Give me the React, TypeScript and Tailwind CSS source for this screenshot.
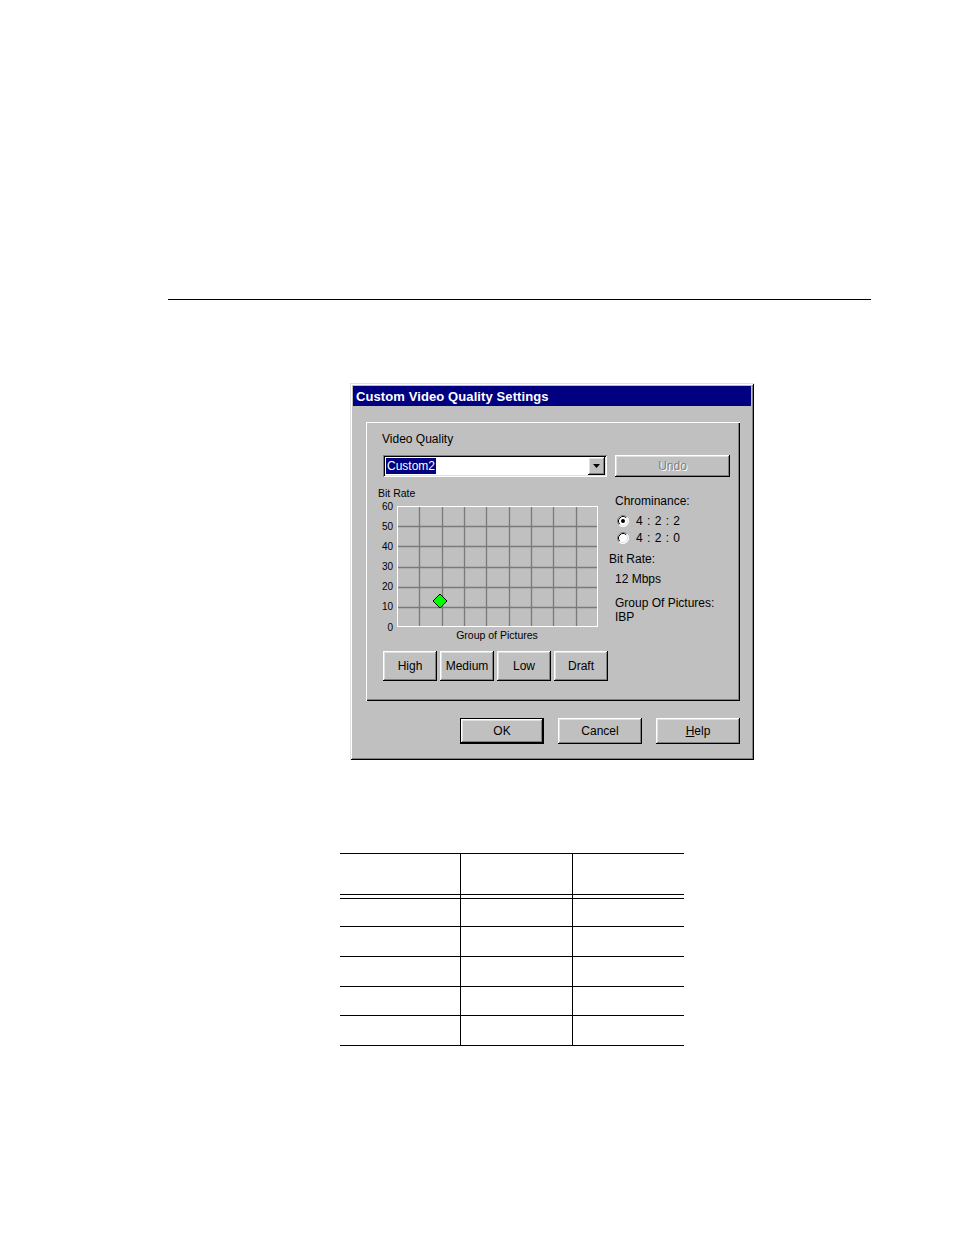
import React from "react";

const raised =
  "shadow-[inset_-1px_-1px_0_0_#000000,inset_1px_1px_0_0_#ffffff,inset_-2px_-2px_0_0_#808080,inset_2px_2px_0_0_#dfdfdf]";
const sunken =
  "shadow-[inset_1px_1px_0_0_#808080,inset_-1px_-1px_0_0_#ffffff,inset_2px_2px_0_0_#000000,inset_-2px_-2px_0_0_#dfdfdf]";

function Radio({ checked }: { checked: boolean }) {
  return (
    <svg width="12" height="12" viewBox="0 0 12 12" className="shrink-0">
      <circle cx="6" cy="6" r="5.5" fill="#ffffff" />
      <path d="M2.11 9.89 A5.5 5.5 0 0 1 9.89 2.11" fill="none" stroke="#808080" strokeWidth="1" />
      <path d="M9.89 2.11 A5.5 5.5 0 0 1 2.11 9.89" fill="none" stroke="#ffffff" strokeWidth="1" />
      <path d="M2.82 9.18 A4.5 4.5 0 0 1 9.18 2.82" fill="none" stroke="#000000" strokeWidth="1" />
      <path d="M9.18 2.82 A4.5 4.5 0 0 1 2.82 9.18" fill="none" stroke="#dfdfdf" strokeWidth="1" />
      {checked && <circle cx="6" cy="6" r="2" fill="#000000" />}
    </svg>
  );
}

function Chart() {
  const x0 = 20;
  const x1 = 221;
  const y0 = 7;
  const y1 = 128;
  const vs = Array.from({ length: 8 }, (_, i) => Math.round(x0 + ((i + 1) * (x1 - x0)) / 9) + 0.5);
  const hs = Array.from({ length: 5 }, (_, i) => Math.round(y0 + ((i + 1) * (y1 - y0)) / 6) + 0.5);
  const labels = [60, 50, 40, 30, 20, 10, 0];
  return (
    <svg width="224" height="145" viewBox="0 0 224 145" className="block">
      {vs.map((x) => (
        <line key={"v" + x} x1={x} y1={y0} x2={x} y2={y1} stroke="#7a7a7a" strokeWidth="1.3" />
      ))}
      {hs.map((y) => (
        <line key={"h" + y} x1={x0} y1={y} x2={x1} y2={y} stroke="#7a7a7a" strokeWidth="1.3" />
      ))}
      <rect x={x0 + 0.5} y={y0 + 0.5} width={x1 - x0 - 1} height={y1 - y0 - 1} fill="none" stroke="#ffffff" strokeWidth="1" />
      {labels.map((l, i) => (
        <text
          key={l}
          x="16"
          y={y0 + (i * (y1 - y0)) / 6 + 3.5}
          textAnchor="end"
          fontSize="10"
          fontFamily="'Liberation Sans', Arial, sans-serif"
          fill="#000000"
        >
          {l}
        </text>
      ))}
      <polygon points="63,95 70,102 63,109 56,102" fill="#00ff00" stroke="#000000" strokeWidth="1" />
      <text
        x="120"
        y="139.5"
        textAnchor="middle"
        fontSize="10.5"
        fontFamily="'Liberation Sans', Arial, sans-serif"
        fill="#000000"
      >
        Group of Pictures
      </text>
    </svg>
  );
}

function Btn({ children, w, h, def }: { children: React.ReactNode; w: string; h: string; def?: boolean }) {
  return (
    <div className={`${w} ${h} ${def ? "border border-black" : ""} bg-[#c0c0c0]`}>
      <div className={`${raised} w-full h-full flex items-center justify-center text-[12px] text-black`}>{children}</div>
    </div>
  );
}

export default function App() {
  const rows = [
    { h: "h-[28px]" },
    { h: "h-[30px]" },
    { h: "h-[30px]" },
    { h: "h-[29px]" },
    { h: "h-[30px]" },
  ];
  return (
    <div className="w-[954px] min-h-[1235px] bg-white flex flex-col font-['Liberation_Sans',Arial,sans-serif]">
      <div className="ml-[168px] mt-[299px] w-[703px] h-px bg-black" />

      {/* Dialog */}
      <div
        className="ml-[350px] mt-[83px] w-[404px] h-[377px] bg-[#c0c0c0] p-[3px] flex flex-col shadow-[inset_1px_1px_0_0_#dfdfdf,inset_-1px_-1px_0_0_#000000,inset_2px_2px_0_0_#ffffff,inset_-2px_-2px_0_0_#808080]"
      >
        <div className="h-[20px] bg-[#000080] flex items-center pl-[3px]">
          <span className="text-white font-bold text-[13px] leading-none tracking-[0.1px]">Custom Video Quality Settings</span>
        </div>

        {/* Group box */}
        <div className="ml-[13px] mt-[16px] w-[374px] h-[279px] pt-[10px] pl-[11px] flex flex-col shadow-[inset_1px_1px_0_0_#ffffff,inset_-1px_-1px_0_0_#000000,inset_-2px_-2px_0_0_#808080]">
          <div className="ml-[5px] h-[14px] leading-[14px] text-[12px] text-black">Video Quality</div>

          <div className="mt-[9px] flex gap-[8px]">
            <div className={`ml-[6px] w-[224px] h-[22px] bg-white ${sunken} flex items-center p-[2px]`}>
              <div className="flex-1 h-full flex items-center pl-[1px]">
                <span className="bg-[#000080] text-white text-[12px] leading-[16px] px-[1px]">Custom2</span>
              </div>
              <div className={`w-[17px] h-[18px] bg-[#c0c0c0] ${raised} flex items-center justify-center`}>
                <svg width="7" height="4" viewBox="0 0 7 4">
                  <polygon points="0,0 7,0 3.5,4" fill="#000000" />
                </svg>
              </div>
            </div>
            <div className={`w-[115px] h-[22px] ${raised} flex items-center justify-center`}>
              <span className="text-[12px] text-[#808080] [text-shadow:1px_1px_0_#ffffff]">Undo</span>
            </div>
          </div>

          <div className="mt-[10px] flex">
            <div className="w-[232px] flex flex-col">
              <div className="ml-[1px] h-[12px] leading-[12px] text-[10.5px] text-black">Bit Rate</div>
              <Chart />
            </div>
            <div className="mt-[7px] flex flex-col text-[12px] text-black leading-[14px]">
              <div className="ml-[6px] h-[14px]">Chrominance:</div>
              <div className="ml-[8px] mt-[6px] h-[14px] flex items-center gap-[7px]">
                <Radio checked />
                <span className="tracking-[0.5px]">4 : 2 : 2</span>
              </div>
              <div className="ml-[8px] mt-[3px] h-[14px] flex items-center gap-[7px]">
                <Radio checked={false} />
                <span className="tracking-[0.5px]">4 : 2 : 0</span>
              </div>
              <div className="mt-[7px] h-[14px]">Bit Rate:</div>
              <div className="ml-[6px] mt-[6px] h-[14px]">12 Mbps</div>
              <div className="ml-[6px] mt-[10px] h-[14px]">Group Of Pictures:</div>
              <div className="ml-[6px] h-[14px]">IBP</div>
            </div>
          </div>

          <div className="mt-[7px] ml-[6px] flex gap-[3px]">
            <Btn w="w-[54px]" h="h-[30px]">High</Btn>
            <Btn w="w-[54px]" h="h-[30px]">Medium</Btn>
            <Btn w="w-[54px]" h="h-[30px]">Low</Btn>
            <Btn w="w-[54px]" h="h-[30px]">Draft</Btn>
          </div>
        </div>

        <div className="ml-[13px] mt-[17px] w-[374px] flex justify-end gap-[14px]">
          <Btn w="w-[84px]" h="h-[26px]" def>
            OK
          </Btn>
          <Btn w="w-[84px]" h="h-[26px]">Cancel</Btn>
          <Btn w="w-[84px]" h="h-[26px]">
            <span>
              <span className="underline">H</span>elp
            </span>
          </Btn>
        </div>
      </div>

      {/* Table */}
      <div className="ml-[340px] mt-[93px] w-[344px] flex flex-col border-t border-black">
        <div className="grid grid-cols-[121px_112px_111px] h-[41px] border-b border-black">
          <div className="border-r border-black" />
          <div className="border-r border-black" />
          <div />
        </div>
        <div className="grid grid-cols-[121px_112px_111px] h-[4px] border-b border-black">
          <div className="border-r border-black" />
          <div className="border-r border-black" />
          <div />
        </div>
        {rows.map((r, i) => (
          <div key={i} className={`grid grid-cols-[121px_112px_111px] ${r.h} border-b border-black`}>
            <div className="border-r border-black" />
            <div className="border-r border-black" />
            <div />
          </div>
        ))}
      </div>
    </div>
  );
}
